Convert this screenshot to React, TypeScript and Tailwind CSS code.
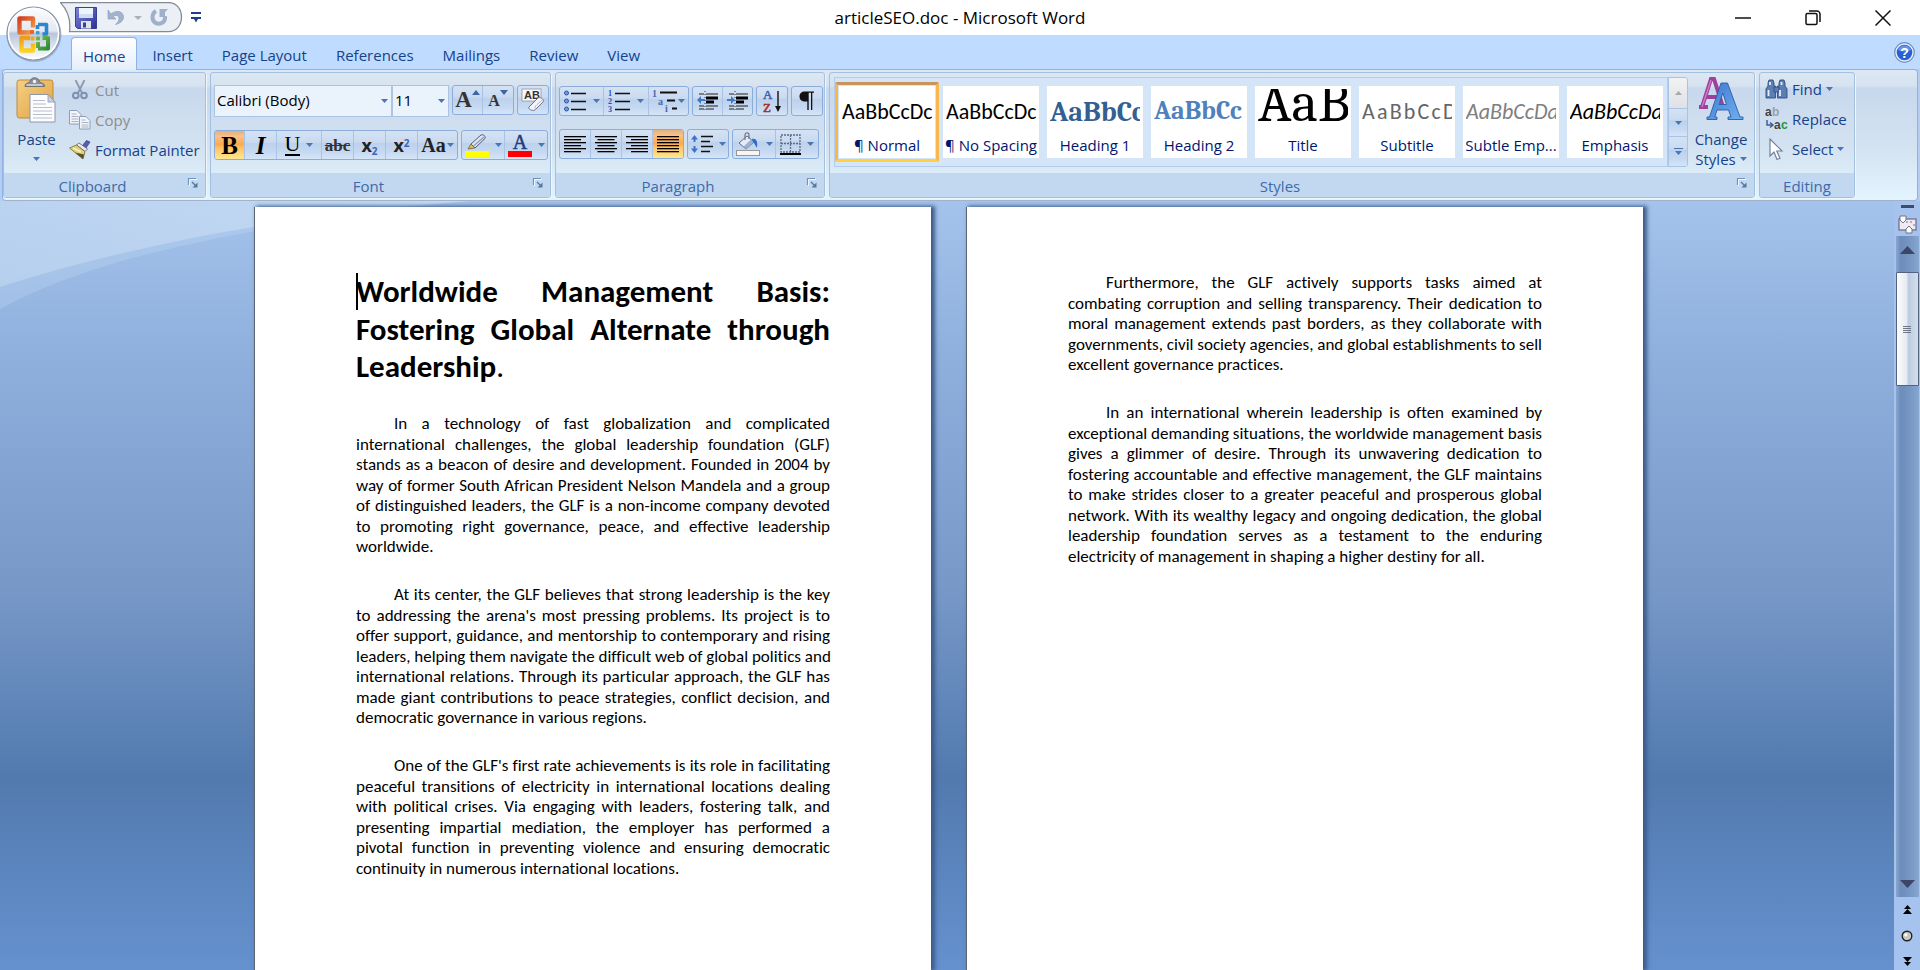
import type { ReactNode } from 'react';

const BTN =
  'bg-[linear-gradient(to_bottom,#d5e2f4_0%,#c9daf0_40%,#bcd1ec_45%,#c6d9f1_75%,#d5e5f8_100%)]';
const ACTIVE =
  'bg-[linear-gradient(to_bottom,#e0b183_0%,#fcc184_20%,#fda84c_48%,#fec262_60%,#ffe78f_100%)]';

function Arrow({ className = '' }: { className?: string }) {
  return (
    <svg width="7" height="4" viewBox="0 0 7 4" className={`shrink-0 ${className}`} aria-hidden="true">
      <path d="M0 0h7L3.5 4z" fill="#4a76b4" />
    </svg>
  );
}

function Launcher({ label }: { label: string }) {
  return (
    <button type="button" aria-label={label} className="absolute right-[6px] top-[4px]">
      <svg width="12" height="12" viewBox="0 0 12 12" fill="none">
        <path d="M1.5 8V1.500H9" stroke="#6f93bd" strokeWidth="1.200" />
        <path d="M2.500 9V2.500H10" stroke="#fff" strokeWidth=".8" />
        <path d="M5 5l4 4" stroke="#54779f" strokeWidth="1.300" />
        <path d="M10.500 5.500v5h-5z" fill="#54779f" />
      </svg>
    </button>
  );
}

function Group({
  name,
  width,
  launcher = true,
  children,
}: {
  name: string;
  width: string;
  launcher?: boolean;
  children: ReactNode;
}) {
  return (
    <section
      aria-label={name}
      className={`${width} shrink-0 overflow-hidden rounded-[3px] border border-[#a3c0de] shadow-[1px_1px_0_#eef6fd]`}
    >
      <div className="h-[100px]">{children}</div>
      <div
        className={`relative h-[24px] bg-[#c1d8f0] text-center text-[15px] leading-[26px] text-[#3e6aaa] ${launcher ? 'pr-[24px]' : ''}`}
      >
        {name}
        {launcher && <Launcher label={`${name} options`} />}
      </div>
    </section>
  );
}

function Box({ children }: { children: ReactNode }) {
  return (
    <div className={`flex h-[30px] divide-x divide-[#a9c3e6] overflow-hidden rounded-[3px] border border-[#8aaddb] leading-none ${BTN}`}>
      {children}
    </div>
  );
}

function Tool({
  label,
  width = 'w-[31px]',
  active = false,
  arrow = false,
  children,
}: {
  label: string;
  width?: string;
  active?: boolean;
  arrow?: boolean;
  children: ReactNode;
}) {
  return (
    <button
      type="button"
      aria-label={label}
      aria-pressed={active}
      className={`${width} flex h-full shrink-0 items-center justify-center gap-[6px] ${active ? ACTIVE : ''}`}
    >
      {children}
      {arrow && <Arrow />}
    </button>
  );
}

/* ---------- icons ---------- */

function OfficeLogo() {
  return (
    <svg width="58" height="58" viewBox="0 0 58 58" aria-hidden="true">
      <defs>
        <linearGradient id="orb" x1="0" y1="0" x2="0" y2="1">
          <stop offset="0" stopColor="#fdfdfe" />
          <stop offset=".45" stopColor="#e3e8f0" />
          <stop offset=".5" stopColor="#b9c6da" />
          <stop offset=".75" stopColor="#dbe3ee" />
          <stop offset="1" stopColor="#ffffff" />
        </linearGradient>
        <linearGradient id="lr" x1="0" y1="0" x2="1" y2="1">
          <stop offset="0" stopColor="#d2401f" />
          <stop offset="1" stopColor="#f5a04a" />
        </linearGradient>
        <linearGradient id="ly" x1="0" y1="0" x2="0" y2="1">
          <stop offset="0" stopColor="#ee9c1b" />
          <stop offset="1" stopColor="#fbd21f" />
        </linearGradient>
        <linearGradient id="lg" x1="0" y1="0" x2="1" y2="1">
          <stop offset="0" stopColor="#74bb4c" />
          <stop offset="1" stopColor="#2f8a35" />
        </linearGradient>
      </defs>
      <circle cx="29" cy="29.500" r="27.500" fill="#8190a8" opacity=".55" />
      <circle cx="28.500" cy="28.500" r="26.500" fill="url(#orb)" stroke="#8795ad" strokeWidth="1.200" />
      <circle cx="28.500" cy="28.500" r="25" fill="none" stroke="#fff" strokeWidth="1.500" />
      <g fill="none" strokeLinejoin="round">
        <path d="M26 27.500H14.500V13.500H28V22.500" stroke="url(#lr)" strokeWidth="4.400" />
        <path d="M33 19.500H41.500V29H37.500M32.500 20v4" stroke="#2b86cf" strokeWidth="3.600" />
        <path d="M25 33H16.500V45.500H28V38.500" stroke="url(#ly)" strokeWidth="4.400" />
        <path d="M33 43.500H43V33H37.500M33 37v6" stroke="url(#lg)" strokeWidth="4" />
      </g>
      <rect x="25" y="25" width="4" height="4" rx="1" fill="#e8642a" />
      <rect x="31" y="26" width="3.500" height="3.500" rx="1" fill="#3f9ade" />
      <rect x="25.500" y="31.500" width="4" height="4" rx="1" fill="#f0a81e" />
      <rect x="31" y="31.500" width="4" height="4" rx="1" fill="#6cb544" />
    </svg>
  );
}

function QuickAccessShape() {
  return (
    <svg width="124" height="32" viewBox="0 0 124 32" className="absolute inset-0" aria-hidden="true">
      <path
        d="M.5.600H108.500c8 0 13 6.500 13 14.500s-5 14.500-13 14.500H9.500C11 17.500 7 7.500.5.600z"
        fill="#ebf0f6"
        stroke="#858b96"
        strokeWidth="1.300"
      />
    </svg>
  );
}

function SaveIcon() {
  return (
    <svg width="22" height="22" viewBox="0 0 22 22" aria-hidden="true">
      <defs>
        <linearGradient id="sv" x1="0" y1="0" x2="1" y2="1">
          <stop offset="0" stopColor="#7f86dc" />
          <stop offset="1" stopColor="#2c2f96" />
        </linearGradient>
      </defs>
      <path d="M.5.500h21v21H2.500l-2-2z" fill="url(#sv)" stroke="#3a3f9e" />
      <rect x="4" y="1" width="14" height="10" fill="#eef4fc" />
      <path d="M4 7h14v4H4z" fill="#cdddf3" />
      <rect x="6" y="14" width="10" height="7.500" fill="#dfe3ea" />
      <rect x="8" y="15.500" width="3" height="5" fill="#3a3f9e" />
    </svg>
  );
}

function UndoIcon() {
  return (
    <svg width="18" height="17" viewBox="0 0 18 17" aria-hidden="true">
      <path d="M1 1v9h8L6.300 7.300C9 5.500 12 6.500 12 9.500c0 2.500-1.500 4-3.500 6 4.500-1 8-3.500 8-7.500C16.500 2 9 .500 4 5z" fill="#a3b3cc" stroke="#8fa1bf" strokeWidth=".7" />
    </svg>
  );
}

function RedoIcon() {
  return (
    <svg width="19" height="19" viewBox="0 0 19 19" fill="none" aria-hidden="true">
      <path d="M6 3C1.500 5.500 1.500 12 5 14.500c4 2.800 10 .5 10-4.500V8" stroke="#9fb0ca" strokeWidth="4" />
      <path d="M9.500 9V1H18l-3 3v5z" fill="#9fb0ca" />
    </svg>
  );
}

function PasteIcon() {
  return (
    <svg width="42" height="46" viewBox="0 0 42 46" aria-hidden="true">
      <defs>
        <linearGradient id="pb" x1="0" y1="0" x2="1" y2="1">
          <stop offset="0" stopColor="#f6cf83" />
          <stop offset="1" stopColor="#dfa342" />
        </linearGradient>
      </defs>
      <rect x="1" y="3" width="36" height="38" rx="2.500" fill="url(#pb)" stroke="#bd8a3c" />
      <path d="M9 9.500c0-3 2-3.500 4.500-4C14.500 2 16 .800 18.500.800S23 2 24 5.500c2.500.5 4.500 1 4.500 4z" fill="#8b8f98" stroke="#5f646e" strokeWidth=".8" />
      <path d="M10.500 8h16" stroke="#d8dade" strokeWidth="1.500" />
      <circle cx="18.500" cy="4.500" r="1.700" fill="#f4f5f7" />
      <path d="M14 17.500h18l7 7.500v20H14z" fill="#fdfdff" stroke="#8d95ab" />
      <path d="M32 17.500V25h7z" fill="#c9d2e6" stroke="#8d95ab" strokeWidth=".8" />
      <path d="M17 23.500h12M17 27h13M17 30.500h19M17 34h19M17 37.500h19M17 41h19" stroke="#b6bdcc" />
    </svg>
  );
}

function CutIcon() {
  return (
    <svg width="16" height="20" viewBox="0 0 16 20" fill="none" aria-hidden="true">
      <path d="M3.500 0l6.500 13M12.500 0L6 13" stroke="#8b97ac" strokeWidth="1.800" />
      <circle cx="3.800" cy="15.500" r="2.800" stroke="#7f8fae" strokeWidth="2" />
      <circle cx="12" cy="15.500" r="2.800" stroke="#7f8fae" strokeWidth="2" />
    </svg>
  );
}

function CopyIcon() {
  return (
    <svg width="22" height="20" viewBox="0 0 22 20" aria-hidden="true">
      <g fill="#f2f5fa" stroke="#8e9db8">
        <path d="M.5.500H8l4 4v9.500H.5z" />
        <path d="M10.500 6.500H17l4 4v8.500H10.500z" />
      </g>
      <path d="M2.500 4h5M2.500 6.500h7M2.500 9h7M2.500 11.500h7M12.500 10h4M12.500 12.500h7M12.500 15h7M12.500 17h7" stroke="#a6b2c8" />
    </svg>
  );
}

function PainterIcon() {
  return (
    <svg width="22" height="20" viewBox="0 0 22 20" aria-hidden="true">
      <path d="M13.500 5.500L17.500.500 21 2l-4 6z" fill="#5b5bb0" stroke="#3e3e86" strokeWidth=".7" />
      <path d="M10 3l8.500 6-2.500 2.500L7.500 5z" fill="#e8ebf1" stroke="#5d6472" strokeWidth=".8" />
      <path d="M7.500 5L16 11.500 14 19 .5 8z" fill="#e2cf7a" stroke="#756a35" strokeWidth=".8" />
      <path d="M6 12.500L14 19l1-4.500z" fill="#56502d" />
      <path d="M4 8l8 4" stroke="#fbf3bd" strokeWidth="1.500" />
    </svg>
  );
}

function GrowFont({ small = false }: { small?: boolean }) {
  return (
    <span className="flex items-end">
      <span className={`font-['Liberation_Serif',serif] font-bold text-[#333] ${small ? 'text-[16px] leading-[20px]' : 'text-[23px] leading-[24px]'}`}>
        A
      </span>
      <svg width="8" height="22" viewBox="0 0 8 22" aria-hidden="true">
        <path d={small ? 'M0 1h8L4 6z' : 'M0 5h8L4 0z'} fill="#3d65a5" />
      </svg>
    </span>
  );
}

function ClearIcon() {
  return (
    <svg width="25" height="24" viewBox="0 0 25 24" className="overflow-visible" aria-hidden="true">
      <rect x="1" y="1" width="19" height="12" fill="#f6f8fb" stroke="#8896ab" strokeWidth=".8" />
      <text x="3" y="11" fontSize="11" fontWeight="bold" fontFamily="Liberation Sans, sans-serif" fill="#333">
        AB
      </text>
      <path d="M8 19l9-9c1.500-1.500 6 1 5.500 3.500L14 22c-2 1.500-7.500-1-6-3z" fill="#f3f4f9" stroke="#6d7288" />
      <path d="M14 22c0-3 .5-4 2-5.500l6-5" fill="none" stroke="#b4b8c8" />
    </svg>
  );
}

function HighlightIcon() {
  return (
    <svg width="24" height="24" viewBox="0 0 24 24" aria-hidden="true">
      <path d="M6 11l10-9c2-1 5 1 4 3.500L10 15z" fill="#dfe5ef" stroke="#4e5b78" />
      <path d="M8.500 13l10.500-9" stroke="#8fa0be" strokeWidth="1.500" />
      <path d="M6 11l4 4-7 1z" fill="#d9bb62" stroke="#6f6136" strokeWidth=".8" />
      <rect y="18" width="24" height="6" fill="#ffff00" />
    </svg>
  );
}

function FontColorIcon() {
  return (
    <svg width="24" height="24" viewBox="0 0 24 24" className="overflow-visible" aria-hidden="true">
      <text x="12" y="16" textAnchor="middle" fontSize="20" fontFamily="Liberation Serif, serif" fill="#1f3b7c" stroke="#1f3b7c" strokeWidth=".5">
        A
      </text>
      <rect y="18" width="24" height="6" fill="#ff0000" />
    </svg>
  );
}

function BulletsIcon() {
  return (
    <svg width="23" height="22" viewBox="0 0 23 22" aria-hidden="true">
      {[3, 11, 19].map((y) => (
        <g key={y}>
          <circle cx="2.500" cy={y} r="2" fill="#6f9be0" stroke="#2d56a8" />
          <path d={`M7 ${y + 0.5}h15`} stroke="#111" strokeWidth="1.300" />
        </g>
      ))}
    </svg>
  );
}

function NumberingIcon() {
  return (
    <svg width="23" height="24" viewBox="0 0 23 24" className="overflow-visible" aria-hidden="true">
      {[4, 12, 20].map((y, i) => (
        <g key={y}>
          <text x="0" y={y + 3} fontSize="8" fontWeight="bold" fontFamily="Liberation Serif, serif" fill="#2b4fc0">
            {i + 1}
          </text>
          <path d={`M7 ${y + 0.5}h15`} stroke="#111" strokeWidth="1.300" />
        </g>
      ))}
    </svg>
  );
}

function MultilevelIcon() {
  return (
    <svg width="25" height="24" viewBox="0 0 25 24" className="overflow-visible" aria-hidden="true">
      <g fontWeight="bold" fontFamily="Liberation Serif, serif" fill="#4b69ad" fontSize="10">
        <text x="0" y="8">1</text>
        <text x="6" y="16">a</text>
        <text x="13" y="23">i</text>
      </g>
      <path d="M8 3.500h17M15 11.500h8M20 19.500h5" stroke="#111" strokeWidth="2" />
    </svg>
  );
}

function IndentIcon({ out = false }: { out?: boolean }) {
  return (
    <svg width="22" height="20" viewBox="0 0 22 20" aria-hidden="true">
      <path d="M2 3h5M2 15h5M2 18h5M9 3h12M9 15h12M9 18h8" stroke="#222" strokeWidth="1.200" />
      <path d="M9 7h12M9 11h8" stroke="#000" strokeWidth="3" />
      <path d="M8 0v20" stroke="#333" strokeDasharray="1 2" />
      <path d={out ? 'M0 9l4-4v3h4v2H4v3z' : 'M8 9L4 5v3H0v2h4v3z'} fill="#3f76cf" />
    </svg>
  );
}

function SortIcon() {
  return (
    <svg width="22" height="24" viewBox="0 0 22 24" className="overflow-visible" aria-hidden="true">
      <g fontFamily="Liberation Serif, serif" fontSize="13" strokeWidth=".5">
        <text x="2" y="10" fill="#3a5fb5" stroke="#3a5fb5">A</text>
        <text x="2" y="23" fill="#a32b25" stroke="#a32b25">Z</text>
      </g>
      <path d="M17 2v17" stroke="#111" strokeWidth="1.400" />
      <path d="M14 17h6l-3 6z" fill="#111" />
    </svg>
  );
}

function PilcrowIcon() {
  return (
    <svg width="16" height="20" viewBox="0 0 16 20" aria-hidden="true">
      <path d="M6 .500h9v1.300h-1.700V19H12V1.800H9.700V19H8.300V10.500H6.500C2.500 10.500.500 8.500.500 5.500S2.500.500 6 .500z" fill="#111" />
    </svg>
  );
}

function AlignIcon({ kind }: { kind: 'left' | 'center' | 'right' | 'justify' }) {
  return (
    <svg width="22" height="17" viewBox="0 0 22 17" aria-hidden="true">
      {[0, 1, 2, 3, 4, 5].map((i) => {
        const w = kind === 'justify' || i % 2 === 0 ? 22 : 17;
        const x = kind === 'left' || kind === 'justify' ? 0 : kind === 'right' ? 22 - w : (22 - w) / 2;
        return <rect key={i} x={x} y={i * 3} width={w} height="1.300" fill="#000" />;
      })}
    </svg>
  );
}

function SpacingIcon() {
  return (
    <svg width="22" height="20" viewBox="0 0 22 20" aria-hidden="true">
      <path d="M3.500 1L7 5.500H4.500V8h-2V5.500H0zM3.500 19L7 14.500H4.500V12h-2v2.500H0z" fill="#3c73cb" />
      <path d="M10 2.500h12M10 7.500h9M10 12.500h12M10 17.500h9" stroke="#111" strokeWidth="1.300" />
    </svg>
  );
}

function BucketIcon() {
  return (
    <svg width="24" height="24" viewBox="0 0 24 24" aria-hidden="true">
      <path d="M3 11l8-7 7 6-8 7z" fill="#e6ebf4" stroke="#5d6f92" />
      <path d="M10 17l8-7-3-2.500-7.500 7z" fill="#9db0d2" />
      <path d="M9 8V3c0-3 4-3 4 0v4" fill="none" stroke="#6b7384" strokeWidth="1.200" />
      <path d="M16 7c4-1 6 2 5 9-2-3-2-4-4-6z" fill="#2f6bd0" />
      <rect x=".5" y="18.500" width="23" height="5" fill="#f6f6f6" stroke="#979797" />
    </svg>
  );
}

function BordersIcon() {
  return (
    <svg width="21" height="21" viewBox="0 0 21 21" fill="none" aria-hidden="true">
      <path d="M1 1h19v17H1zM10.500 1v17M1 9.500h19" stroke="#5e6b80" strokeDasharray="2 1" strokeWidth="1.300" />
      <path d="M0 20h21" stroke="#000" strokeWidth="2" />
    </svg>
  );
}

function ChangeStylesIcon() {
  return (
    <svg width="46" height="44" viewBox="0 0 46 44" aria-hidden="true">
      <defs>
        <linearGradient id="ca" x1="0" y1="0" x2="1" y2="1">
          <stop offset="0" stopColor="#3f78cf" />
          <stop offset="1" stopColor="#6fb0f0" />
        </linearGradient>
      </defs>
      <path d="M1 30h9M15 30h7M4 30L13 2h3l9 28M8 20h12" fill="none" stroke="#a03f9c" strokeWidth="4" />
      <path d="M4 30L13 3" fill="none" stroke="#cf7ecb" strokeWidth="1.300" />
      <path
        d="M9 40h2.500L23 6h6.500L42 40h3v2.500H30V40h3l-2.500-7H19l-2.200 7H19v2.500H9zM21 27.500h7.500L24.800 16z"
        fill="url(#ca)"
        stroke="#2c5ba6"
        strokeWidth=".9"
        fillRule="evenodd"
      />
    </svg>
  );
}

function FindIcon() {
  return (
    <svg width="23" height="20" viewBox="0 0 23 20" aria-hidden="true">
      <g fill="#5b7fb4" stroke="#2f4d80" strokeWidth=".9">
        <path d="M4 1h4l1 3v3h1.500v12H1v-9l2-3V4z" />
        <path d="M15 1h4l1 3v3l2 3v9h-9.500V7H14V4z" />
        <path d="M9 8h5v5H9z" />
      </g>
      <path d="M3.500 11v6M15 11v6M5 3v3M16.500 3v3" stroke="#e7eef9" strokeWidth="1.800" />
    </svg>
  );
}

function ReplaceIcon() {
  return (
    <svg width="23" height="24" viewBox="0 0 23 24" className="overflow-visible" aria-hidden="true">
      <g fontFamily="Liberation Sans, sans-serif" fontWeight="bold" fontSize="12">
        <text x="0" y="9" fill="#444">a</text>
        <text x="7" y="9" fill="#9aa0aa">b</text>
        <text x="9" y="22" fill="#444">a</text>
        <text x="16" y="22" fill="#23962f">c</text>
      </g>
      <path d="M2 13v5h5M5 15.500L8 18l-3 2.500" fill="none" stroke="#3f5f96" strokeWidth="1.500" />
    </svg>
  );
}

function SelectIcon() {
  return (
    <svg width="23" height="23" viewBox="0 0 23 23" aria-hidden="true">
      <path d="M5 1v17l4-4 3 7.500 3-1.300-3.200-7.200H17z" fill="#fff" stroke="#71809c" strokeWidth="1.200" />
    </svg>
  );
}

/* ---------- ribbon data ---------- */

const tabs = ['Home', 'Insert', 'Page Layout', 'References', 'Mailings', 'Review', 'View'];

const styles = [
  { name: '¶ Normal', sample: 'AaBbCcDc', look: 'font-[Carlito,Lato,sans-serif] text-[22px] text-black' },
  { name: '¶ No Spacing', sample: 'AaBbCcDc', look: 'font-[Carlito,Lato,sans-serif] text-[22px] text-black' },
  { name: 'Heading 1', sample: 'AaBbCc', look: "font-[Caladea,'Liberation_Serif',serif] font-bold text-[28px] text-[#365f91]" },
  { name: 'Heading 2', sample: 'AaBbCc', look: "font-[Caladea,'Liberation_Serif',serif] font-bold text-[26px] text-[#4f81bd]" },
  { name: 'Title', sample: 'AaB', look: "self-start font-[Caladea,'Liberation_Serif',serif] text-[56px] leading-[28px] text-black" },
  { name: 'Subtitle', sample: 'AaBbCcD', look: 'font-[Carlito,Lato,sans-serif] text-[22px] tracking-widest text-[#666]' },
  { name: 'Subtle Emp...', sample: 'AaBbCcDa', look: 'font-[Carlito,Lato,sans-serif] text-[22px] italic text-[#808080]' },
  { name: 'Emphasis', sample: 'AaBbCcDa', look: 'font-[Carlito,Lato,sans-serif] text-[22px] italic text-black' },
];

const firstPage = [
  [
    'In a technology of fast globalization and complicated',
    'international challenges, the global leadership foundation (GLF)',
    'stands as a beacon of desire and development. Founded in 2004 by',
    'way of former South African President Nelson Mandela and a group',
    'of distinguished leaders, the GLF is a non-income company devoted',
    'to promoting right governance, peace, and effective leadership',
    'worldwide.',
  ],
  [
    'At its center, the GLF believes that strong leadership is the key',
    "to addressing the arena's most pressing problems. Its project is to",
    'offer support, guidance, and mentorship to contemporary and rising',
    'leaders, helping them navigate the difficult web of global politics and',
    'international relations. Through its particular approach, the GLF has',
    'made giant contributions to peace strategies, conflict decision, and',
    'democratic governance in various regions.',
  ],
  [
    "One of the GLF's first rate achievements is its role in facilitating",
    'peaceful transitions of electricity in international locations dealing',
    'with political crises. Via engaging with leaders, fostering talk, and',
    'presenting impartial mediation, the employer has performed a',
    'pivotal function in preventing violence and ensuring democratic',
    'continuity in numerous international locations.',
  ],
];

const secondPage = [
  [
    'Furthermore, the GLF actively supports tasks aimed at',
    'combating corruption and selling transparency. Their dedication to',
    'moral management extends past borders, as they collaborate with',
    'governments, civil society agencies, and global establishments to sell',
    'excellent governance practices.',
  ],
  [
    'In an international wherein leadership is often examined by',
    'exceptional demanding situations, the worldwide management basis',
    'gives a glimmer of desire. Through its unwavering dedication to',
    'fostering accountable and effective management, the GLF maintains',
    'to make strides closer to a greater peaceful and prosperous global',
    'network. With its wealthy legacy and ongoing dedication, the global',
    'leadership foundation serves as a testament to the enduring',
    'electricity of management in shaping a higher destiny for all.',
  ],
];

function Paragraph({ lines }: { lines: string[] }) {
  return (
    <p className="whitespace-nowrap text-[17px] text-black">
      {lines.map((line) => (
        <span
          key={line}
          className="block odd:leading-[20px] even:leading-[21px] [text-align-last:justify] first:pl-[38px] last:[text-align-last:left]"
        >
          {line}{' '}
        </span>
      ))}
    </p>
  );
}

function TitleBar() {
  return (
    <header className="relative flex h-[35px] shrink-0 items-center bg-white">
      <div className="relative ml-[60px] flex h-[32px] w-[124px] items-center">
        <QuickAccessShape />
        <div className="relative flex items-center pl-[15px]">
          <button type="button" aria-label="Save"><SaveIcon /></button>
          <button type="button" aria-label="Undo" className="ml-[10px]"><UndoIcon /></button>
          <button type="button" aria-label="Undo history" className="ml-[9px]">
            <svg width="8" height="4" viewBox="0 0 8 4" aria-hidden="true"><path d="M0 0h8L4 4z" fill="#b0b0b0" /></svg>
          </button>
          <button type="button" aria-label="Redo" className="ml-[8px]"><RedoIcon /></button>
        </div>
      </div>
      <button type="button" aria-label="Customize quick access" className="ml-[7px]">
        <svg width="10" height="11" viewBox="0 0 10 11" aria-hidden="true">
          <path d="M0 0h10v2H0zM0 5h10v2H7L5 10.500 3 7H0z" fill="#1d3f87" />
        </svg>
      </button>
      <h1 className="pointer-events-none absolute inset-x-0 text-center text-[17px] leading-[36px] text-black">
        articleSEO.doc - Microsoft Word
      </h1>
      <div className="relative ml-auto flex items-center pr-[2px]">
        <button type="button" aria-label="Minimize" className="flex h-[32px] w-[70px] items-center justify-center">
          <svg width="16" height="16" viewBox="0 0 16 16"><path d="M0 8h16" stroke="#111" strokeWidth="1.500" /></svg>
        </button>
        <button type="button" aria-label="Restore" className="flex h-[32px] w-[70px] items-center justify-center">
          <svg width="16" height="16" viewBox="0 0 16 16" fill="none" stroke="#111" strokeWidth="1.500">
            <rect x="1" y="3.500" width="11" height="11" rx="1.500" />
            <path d="M4 1h8c1.500 0 3 1.500 3 3v8" />
          </svg>
        </button>
        <button type="button" aria-label="Close" className="flex h-[32px] w-[70px] items-center justify-center">
          <svg width="16" height="16" viewBox="0 0 16 16"><path d="M.500.500l15 15M15.500.500l-15 15" stroke="#111" strokeWidth="1.500" /></svg>
        </button>
      </div>
      <button type="button" aria-label="Office Button" className="absolute left-[5px] top-[5px] z-10">
        <OfficeLogo />
      </button>
    </header>
  );
}

function Tabs() {
  return (
    <nav aria-label="Ribbon tabs" className="flex h-[34px] shrink-0 items-end gap-px bg-[#bfdbff] pl-[71px]">
      {tabs.map((tab, i) => (
        <a
          key={tab}
          href="#"
          aria-current={i === 0 ? 'page' : undefined}
          className={
            i === 0
              ? 'relative z-[1] -mb-px h-[33px] rounded-t-[4px] border border-b-0 border-[#8db2e3] bg-linear-to-b from-white to-[#e5eefa] px-[11px] text-[15px] leading-[36px] text-[#15428b]'
              : 'h-[32px] px-[14px] text-[15px] leading-[36px] text-[#15428b]'
          }
        >
          {tab}
        </a>
      ))}
      <button type="button" aria-label="Help" className="mb-[6px] ml-auto mr-[5px]">
        <svg width="21" height="21" viewBox="0 0 21 21" aria-hidden="true">
          <circle cx="10.500" cy="10.500" r="9.800" fill="#e6eefa" stroke="#6d8fc2" strokeWidth="1.200" />
          <circle cx="10.500" cy="10.500" r="7.800" fill="#2a5fd6" />
          <path d="M4 8a7 7 0 0 1 13 0c-4 2-9 2-13 0z" fill="#7ea8f0" opacity=".7" />
          <text x="10.500" y="15.500" textAnchor="middle" fontSize="14" fontWeight="bold" fontFamily="Liberation Sans, sans-serif" fill="#fff">?</text>
        </svg>
      </button>
    </nav>
  );
}

function ClipboardGroup() {
  const row = 'flex h-[30px] items-center gap-[4px] text-[15px]';
  return (
    <Group name="Clipboard" width="w-[203px]">
      <div className="flex">
        <button type="button" className="flex w-[65px] flex-col items-center pt-[4px] text-[15px] leading-[20px] text-[#15428b]">
          <PasteIcon />
          <span className="mt-[6px]">Paste</span>
          <Arrow className="mt-[8px]" />
        </button>
        <div className="flex flex-col pt-[2px]">
          <button type="button" disabled className={`${row} text-[#8d8d8d]`}>
            <span className="flex w-[22px] justify-center"><CutIcon /></span>Cut
          </button>
          <button type="button" disabled className={`${row} text-[#8d8d8d]`}>
            <CopyIcon />Copy
          </button>
          <button type="button" className={`${row} whitespace-nowrap text-[#15428b]`}>
            <PainterIcon />Format Painter
          </button>
        </div>
      </div>
    </Group>
  );
}

function Combo({ label, value, width }: { label: string; value: string; width: string }) {
  return (
    <div className={`relative ${width}`}>
      <select
        aria-label={label}
        defaultValue={value}
        className="h-[32px] w-full appearance-none border border-[#abc4e3] bg-[#eaf2fb] pb-[2px] pl-[2px] text-[15px] text-black"
      >
        <option>{value}</option>
      </select>
      <Arrow className="pointer-events-none absolute right-[4px] top-[14px]" />
    </div>
  );
}

function FontGroup() {
  const serif = "font-['Liberation_Serif',serif]";
  return (
    <Group name="Font" width="w-[341px]">
      <div className="flex flex-col gap-[13px] pl-[3px] pt-[12px]">
        <div className="flex items-start">
          <Combo label="Font" value="Calibri (Body)" width="w-[178px]" />
          <Combo label="Font size" value="11" width="w-[57px]" />
          <div className="ml-[3px] flex gap-[3px]">
            <Box>
              <Tool label="Grow font" width="w-[30px]"><GrowFont /></Tool>
              <Tool label="Shrink font" width="w-[30px]"><GrowFont small /></Tool>
            </Box>
            <Box>
              <Tool label="Clear formatting" width="w-[30px]"><ClearIcon /></Tool>
            </Box>
          </div>
        </div>
        <div className="flex gap-[3px]">
          <Box>
            <Tool label="Bold" width="w-[30px]" active><span className={`${serif} text-[25px] font-bold`}>B</span></Tool>
            <Tool label="Italic" width="w-[32px]"><span className={`${serif} text-[25px] font-bold italic`}>I</span></Tool>
            <Tool label="Underline" width="w-[45px]" arrow><span className={`${serif} border-b-2 border-black text-[22px] leading-[20px]`}>U</span></Tool>
            <Tool label="Strikethrough" width="w-[32px]"><span className={`${serif} text-[17px] font-bold text-[#333] line-through`}>abc</span></Tool>
            <Tool label="Subscript" width="w-[32px]">
              <span className="text-[18px] font-bold text-[#222]">x<sub className="text-[10px] text-[#3d65b5]">2</sub></span>
            </Tool>
            <Tool label="Superscript" width="w-[32px]">
              <span className="text-[18px] font-bold text-[#222]">x<sup className="text-[10px] text-[#3d65b5]">2</sup></span>
            </Tool>
            <button type="button" aria-label="Change case" className="flex w-[39px] items-center justify-center gap-px">
              <span className={`${serif} text-[20px] font-bold text-[#222]`}>Aa</span><Arrow />
            </button>
          </Box>
          <Box>
            <Tool label="Highlight" width="w-[43px]" arrow><HighlightIcon /></Tool>
            <Tool label="Font color" width="w-[42px]" arrow><FontColorIcon /></Tool>
          </Box>
        </div>
      </div>
    </Group>
  );
}

function ParagraphGroup() {
  return (
    <Group name="Paragraph" width="w-[270px]">
      <div className="flex flex-col gap-[13px] pl-[3px] pt-[13px]">
        <div className="flex gap-[3px]">
          <Box>
            <Tool label="Bullets" width="w-[44px]" arrow><BulletsIcon /></Tool>
            <Tool label="Numbering" width="w-[45px]" arrow><NumberingIcon /></Tool>
            <button type="button" aria-label="Multilevel list" className="flex w-[39px] items-center justify-center gap-px">
              <MultilevelIcon /><Arrow />
            </button>
          </Box>
          <Box>
            <Tool label="Decrease indent" width="w-[30px]"><IndentIcon out /></Tool>
            <Tool label="Increase indent" width="w-[29px]"><IndentIcon /></Tool>
          </Box>
          <Box><Tool label="Sort" width="w-[30px]"><SortIcon /></Tool></Box>
          <Box><Tool label="Show marks" width="w-[30px]"><PilcrowIcon /></Tool></Box>
        </div>
        <div className="flex gap-[3px]">
          <Box>
            <Tool label="Align left"><AlignIcon kind="left" /></Tool>
            <Tool label="Center"><AlignIcon kind="center" /></Tool>
            <Tool label="Align right"><AlignIcon kind="right" /></Tool>
            <Tool label="Justify" width="w-[30px]" active><AlignIcon kind="justify" /></Tool>
          </Box>
          <Box><Tool label="Line spacing" width="w-[40px]" arrow><SpacingIcon /></Tool></Box>
          <Box>
            <Tool label="Shading" width="w-[43px]" arrow><BucketIcon /></Tool>
            <Tool label="Borders" width="w-[42px]" arrow><BordersIcon /></Tool>
          </Box>
        </div>
      </div>
    </Group>
  );
}

function StylesGroup() {
  return (
    <Group name="Styles" width="w-[926px]">
      <div className="flex pl-[4px] pt-[4px]">
        <div className="flex h-[90px] border border-[#b3cdee] bg-[#d4e5f8] pt-[4px]">
          {styles.map((s, i) => (
            <button
              key={s.name}
              type="button"
              aria-pressed={i === 0}
              className={`h-[80px] w-[104px] border-[3px] p-px ${
                i === 0
                  ? 'rounded-[2px] border-x-[#f9b64e] border-b-[#ffd040] border-t-[#c8935c]'
                  : 'border-transparent'
              }`}
            >
              <span className="flex h-[72px] flex-col bg-white px-[3px] pt-[3px]">
                <span className="flex h-[45px] items-center overflow-hidden whitespace-nowrap">
                  <span className={s.look}>{s.sample}</span>
                </span>
                <span className="self-center whitespace-nowrap text-[15px] leading-[22px] text-[#00156e]">{s.name}</span>
              </span>
            </button>
          ))}
        </div>
        <div className="flex h-[90px] w-[20px] flex-col overflow-hidden rounded-r-[3px] border border-[#a9c3e6]">
          <button type="button" aria-label="Scroll styles up" className="flex h-[30px] items-center justify-center bg-linear-to-b from-[#f2f2f2] to-[#dfe1e6]">
            <svg width="7" height="4" viewBox="0 0 7 4"><path d="M0 4h7L3.500 0z" fill="#a9a9a9" /></svg>
          </button>
          <button type="button" aria-label="Scroll styles down" className={`flex h-[29px] items-center justify-center border-y border-[#a9c3e6] ${BTN}`}>
            <Arrow />
          </button>
          <button type="button" aria-label="More styles" className={`flex flex-1 flex-col items-center justify-center gap-[2px] ${BTN}`}>
            <span className="h-px w-[9px] bg-[#4a76b4]" />
            <Arrow />
          </button>
        </div>
        <button type="button" className="flex flex-1 flex-col items-center text-[15px] leading-[20px] text-[#15428b]">
          <ChangeStylesIcon />
          <span className="mt-[8px]">Change</span>
          <span className="flex items-center gap-[4px]">Styles <Arrow /></span>
        </button>
      </div>
    </Group>
  );
}

function EditingGroup() {
  const row = 'flex h-[30px] items-center gap-[4px] text-[15px] text-[#15428b]';
  return (
    <Group name="Editing" width="w-[96px]" launcher={false}>
      <div className="flex flex-col pl-[5px] pt-px">
        <button type="button" className={row}><FindIcon />Find <Arrow /></button>
        <button type="button" className={row}><ReplaceIcon />Replace</button>
        <button type="button" className={row}><SelectIcon />Select <Arrow /></button>
      </div>
    </Group>
  );
}

function ScrollBar() {
  return (
    <aside aria-label="Scroll bar" className="relative flex w-[26px] shrink-0 flex-col items-center bg-[#a6c3ef]">
      <div className="mt-[4px] h-[3px] w-[13px] bg-[#414a6b]" />
      <button type="button" aria-label="Toggle ruler" className="mt-[5px] h-[23px]">
        <svg width="19" height="19" viewBox="0 0 19 19" aria-hidden="true">
          <rect x="1" y="4" width="17" height="11" fill="#f2eaf2" stroke="#6d7488" strokeWidth="1.300" />
          <path d="M2 1h6v4L5 8 2 5zM8 18v-4l3-3 3 3v4z" fill="#fff" stroke="#6d7488" />
          <path d="M9 6v2M13 6v2M16 9v2" stroke="#6d7488" />
        </svg>
      </button>
      <div className="flex w-[23px] flex-1 flex-col items-center bg-[linear-gradient(to_right,#8ba7cf,#6c8dbb_20%,#7697c3_60%,#87a6d0)]">
        <button type="button" aria-label="Scroll up" className="flex h-[36px] items-start justify-center pt-[10px]">
          <svg width="15" height="8" viewBox="0 0 15 8"><path d="M0 8L7.500 0 15 8z" fill="#3d4568" /></svg>
        </button>
        <div className="flex h-[114px] w-full flex-col items-center justify-center gap-px rounded-[1px] border border-[#54627f] bg-[linear-gradient(to_right,#fbfcfd,#e6ebf2_45%,#bccce0_55%,#d4dfec)]">
          {[0, 1, 2, 3].map((n) => (
            <span key={n} className="h-px w-[8px] bg-[#6f7787]" />
          ))}
        </div>
        <button type="button" aria-label="Scroll down" className="mt-auto flex h-[26px] items-center justify-center">
          <svg width="15" height="8" viewBox="0 0 15 8"><path d="M0 0L7.500 8 15 0z" fill="#3d4568" /></svg>
        </button>
      </div>
      <div className="flex h-[73px] flex-col items-center justify-between pb-[4px] pt-[8px]">
        <button type="button" aria-label="Previous page">
          <svg width="9" height="10" viewBox="0 0 9 10"><path d="M4.500 0L8 4H1zM4.500 4L9 9H0z" fill="#000" /></svg>
        </button>
        <button type="button" aria-label="Select browse object">
          <svg width="12" height="12" viewBox="0 0 12 12">
            <circle cx="6" cy="6" r="4.800" fill="#c9c9bf" stroke="#222" strokeWidth="1.400" />
            <circle cx="4.800" cy="4.800" r="1.600" fill="#fff" />
          </svg>
        </button>
        <button type="button" aria-label="Next page">
          <svg width="9" height="10" viewBox="0 0 9 10"><path d="M4.500 10L8 6H1zM4.500 6L9 1H0z" fill="#000" /></svg>
        </button>
      </div>
    </aside>
  );
}

function Document() {
  const page =
    'relative w-[677px] shrink-0 border-l border-[#5b6574] bg-white px-[101px] pt-[66px] font-[Carlito,Lato,sans-serif] shadow-[3px_0_4px_1px_#3d5c8b] [font-variant-ligatures:none]';
  return (
    <main className="relative flex min-h-0 flex-1 bg-[linear-gradient(to_bottom,#a4c3ec_0%,#8fb0dd_20%,#7899c8_50%,#527aaf_75%,#6591ce_100%)]">
      <div className="relative flex min-w-0 flex-1 justify-center gap-[35px] overflow-hidden pl-[3px] pt-[6px]">
        <svg
          width="560"
          height="120"
          viewBox="0 0 560 120"
          className="pointer-events-none absolute left-0 top-0"
          aria-hidden="true"
        >
          <defs>
            <linearGradient id="sw" x1="0" y1="0" x2="1" y2="0">
              <stop offset="0" stopColor="#c4dbf3" stopOpacity=".5" />
              <stop offset="1" stopColor="#d4e4f7" stopOpacity=".6" />
            </linearGradient>
          </defs>
          <path d="M0 0H470C300 12 130 44 0 86z" fill="url(#sw)" />
          <path d="M0 0H470C280 22 110 48 0 108z" fill="#d0e2f6" opacity=".22" />
        </svg>
        <article className={page}>
          <h2 className="relative whitespace-nowrap text-[31px] font-bold leading-[37px] text-black">
            <span className="absolute left-0 top-0 h-[37px] w-[2px] bg-black" />
            <span className="block [text-align-last:justify]">Worldwide Management Basis:</span>
            <span className="block leading-[38px] [text-align-last:justify]">Fostering Global Alternate through</span>
            <span className="block">Leadership<span className="font-normal">.</span></span>
          </h2>
          <div className="mt-[29px] flex flex-col gap-[28px]">
            {firstPage.map((lines) => (
              <Paragraph key={lines[0]} lines={lines} />
            ))}
          </div>
        </article>
        <article className={page}>
          <div className="flex flex-col gap-[28px]">
            {secondPage.map((lines) => (
              <Paragraph key={lines[0]} lines={lines} />
            ))}
          </div>
        </article>
      </div>
      <ScrollBar />
    </main>
  );
}

export default function App() {
  return (
    <div className="flex h-screen flex-col overflow-hidden bg-[#bfdbff] font-['Open_Sans',sans-serif]">
      <TitleBar />
      <Tabs />
      <div className="shrink-0 bg-[#b4cdf0] px-[2px]">
        <div className="flex gap-[4px] rounded-[4px] border border-[#8db2e3] border-b-[#9db4cc] bg-[linear-gradient(to_bottom,#dde8f4_0px,#d7e2f0_16px,#c8d8ed_18px,#d4e3f1_80px,#e2f3fe_126px)] pb-[2px] pt-[2px]">
          <ClipboardGroup />
          <FontGroup />
          <ParagraphGroup />
          <StylesGroup />
          <EditingGroup />
        </div>
      </div>
      <Document />
    </div>
  );
}
